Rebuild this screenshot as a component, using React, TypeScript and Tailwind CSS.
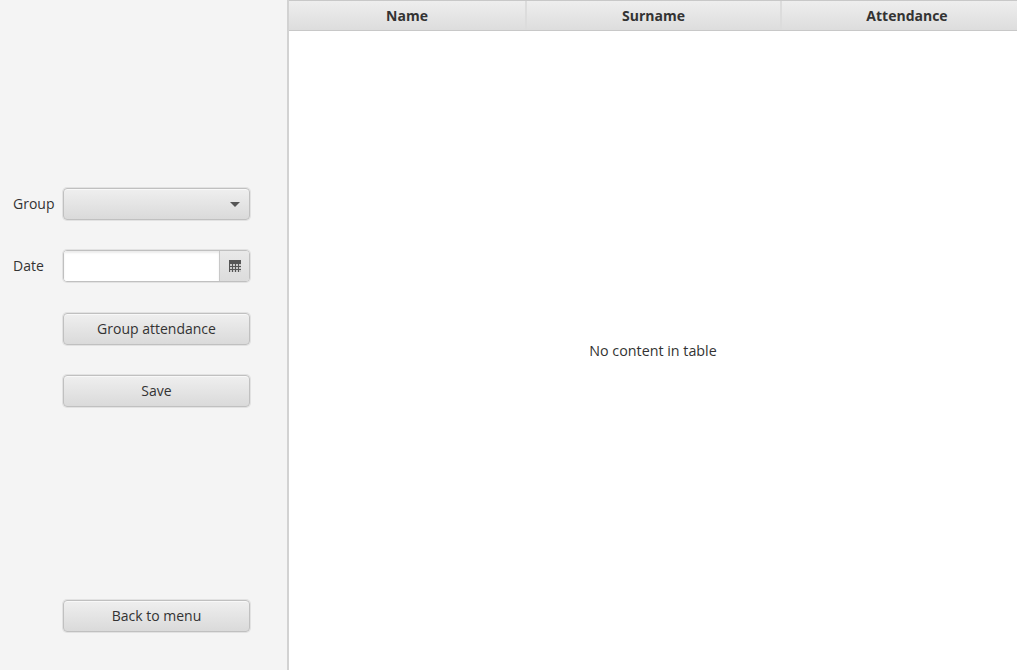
import React from 'react';

const font = "font-['Open_Sans','Noto_Sans',sans-serif]";
const raised =
  'h-[32px] rounded-[4px] border border-[#c0c0c0] bg-gradient-to-b from-[#efefef] to-[#dadada] shadow-[inset_0_1px_0_#f8f8f8,0_0_0_1px_#e2e2e2]';

const ActionButton: React.FC<{ label: string; className?: string }> = ({ label, className = '' }) => (
  <button className={`${raised} ml-[63px] w-[187px] text-[14px] leading-none text-[#333333] ${className}`}>
    {label}
  </button>
);

const CalendarIcon = () => (
  <svg width="12" height="12" viewBox="0 0 12 12" shapeRendering="crispEdges">
    <rect x="0" y="0" width="12" height="12" fill="#555555" />
    {[4, 7, 10].map(y =>
      [1, 4, 7, 10].map(x => <rect key={`${x}-${y}`} x={x} y={y} width="1.5" height="1.5" fill="#c9c9c9" />)
    )}
  </svg>
);

const columnas = [
  { nombre: 'Name', ancho: 'w-[238px]' },
  { nombre: 'Surname', ancho: 'w-[255px]' },
  { nombre: 'Attendance', ancho: 'w-[250px]' },
];

export default function App() {
  return (
    <div className={`flex h-[670px] w-[1017px] overflow-hidden bg-white ${font}`}>
      {/* Panel izquierdo */}
      <div className="flex w-[287px] shrink-0 flex-col bg-[#f4f4f4] pt-[188px]">
        <div className="flex items-center">
          <span className="w-[63px] pb-[2px] pl-[13px] text-[14px] text-[#333333]">Group</span>
          <div className={`${raised} flex w-[187px] items-center justify-end pr-[9px]`}>
            <div className="h-0 w-0 border-x-[5px] border-t-[5px] border-x-transparent border-t-[#555555]" />
          </div>
        </div>

        <div className="mt-[30px] flex items-center">
          <span className="w-[63px] pb-[2px] pl-[13px] text-[14px] text-[#333333]">Date</span>
          <div className="flex h-[32px] w-[187px] overflow-hidden rounded-[4px] border border-[#c0c0c0] shadow-[0_0_0_1px_#e2e2e2]">
            <div className="flex-1 bg-white shadow-[inset_0_2px_2px_#ececec]" />
            <div className="flex w-[30px] items-center justify-center border-l border-[#c8c8c8] bg-gradient-to-b from-[#e9e9e9] to-[#dcdcdc]">
              <CalendarIcon />
            </div>
          </div>
        </div>

        <ActionButton label="Group attendance" className="mt-[31px]" />
        <ActionButton label="Save" className="mt-[30px]" />
        <ActionButton label="Back to menu" className="mt-[193px]" />
      </div>

      {/* Tabla */}
      <div className="flex min-w-0 flex-1 flex-col border-l-2 border-[#d2d2d2]">
        <div className="flex h-[31px] border-y border-[#c8c8c8] bg-gradient-to-b from-[#eeeeee] to-[#dddddd]">
          {columnas.map((c, i) => (
            <div
              key={c.nombre}
              className={`${c.ancho} flex shrink-0 items-center justify-center text-[14px] font-bold text-[#333333] ${
                i < 2 ? 'border-r-2 border-[#dcdcdc]' : ''
              }`}
            >
              {c.nombre}
            </div>
          ))}
        </div>
        <div className="flex flex-1 items-center justify-center text-[14.3px] text-[#333333]">
          No content in table
        </div>
      </div>
    </div>
  );
}
